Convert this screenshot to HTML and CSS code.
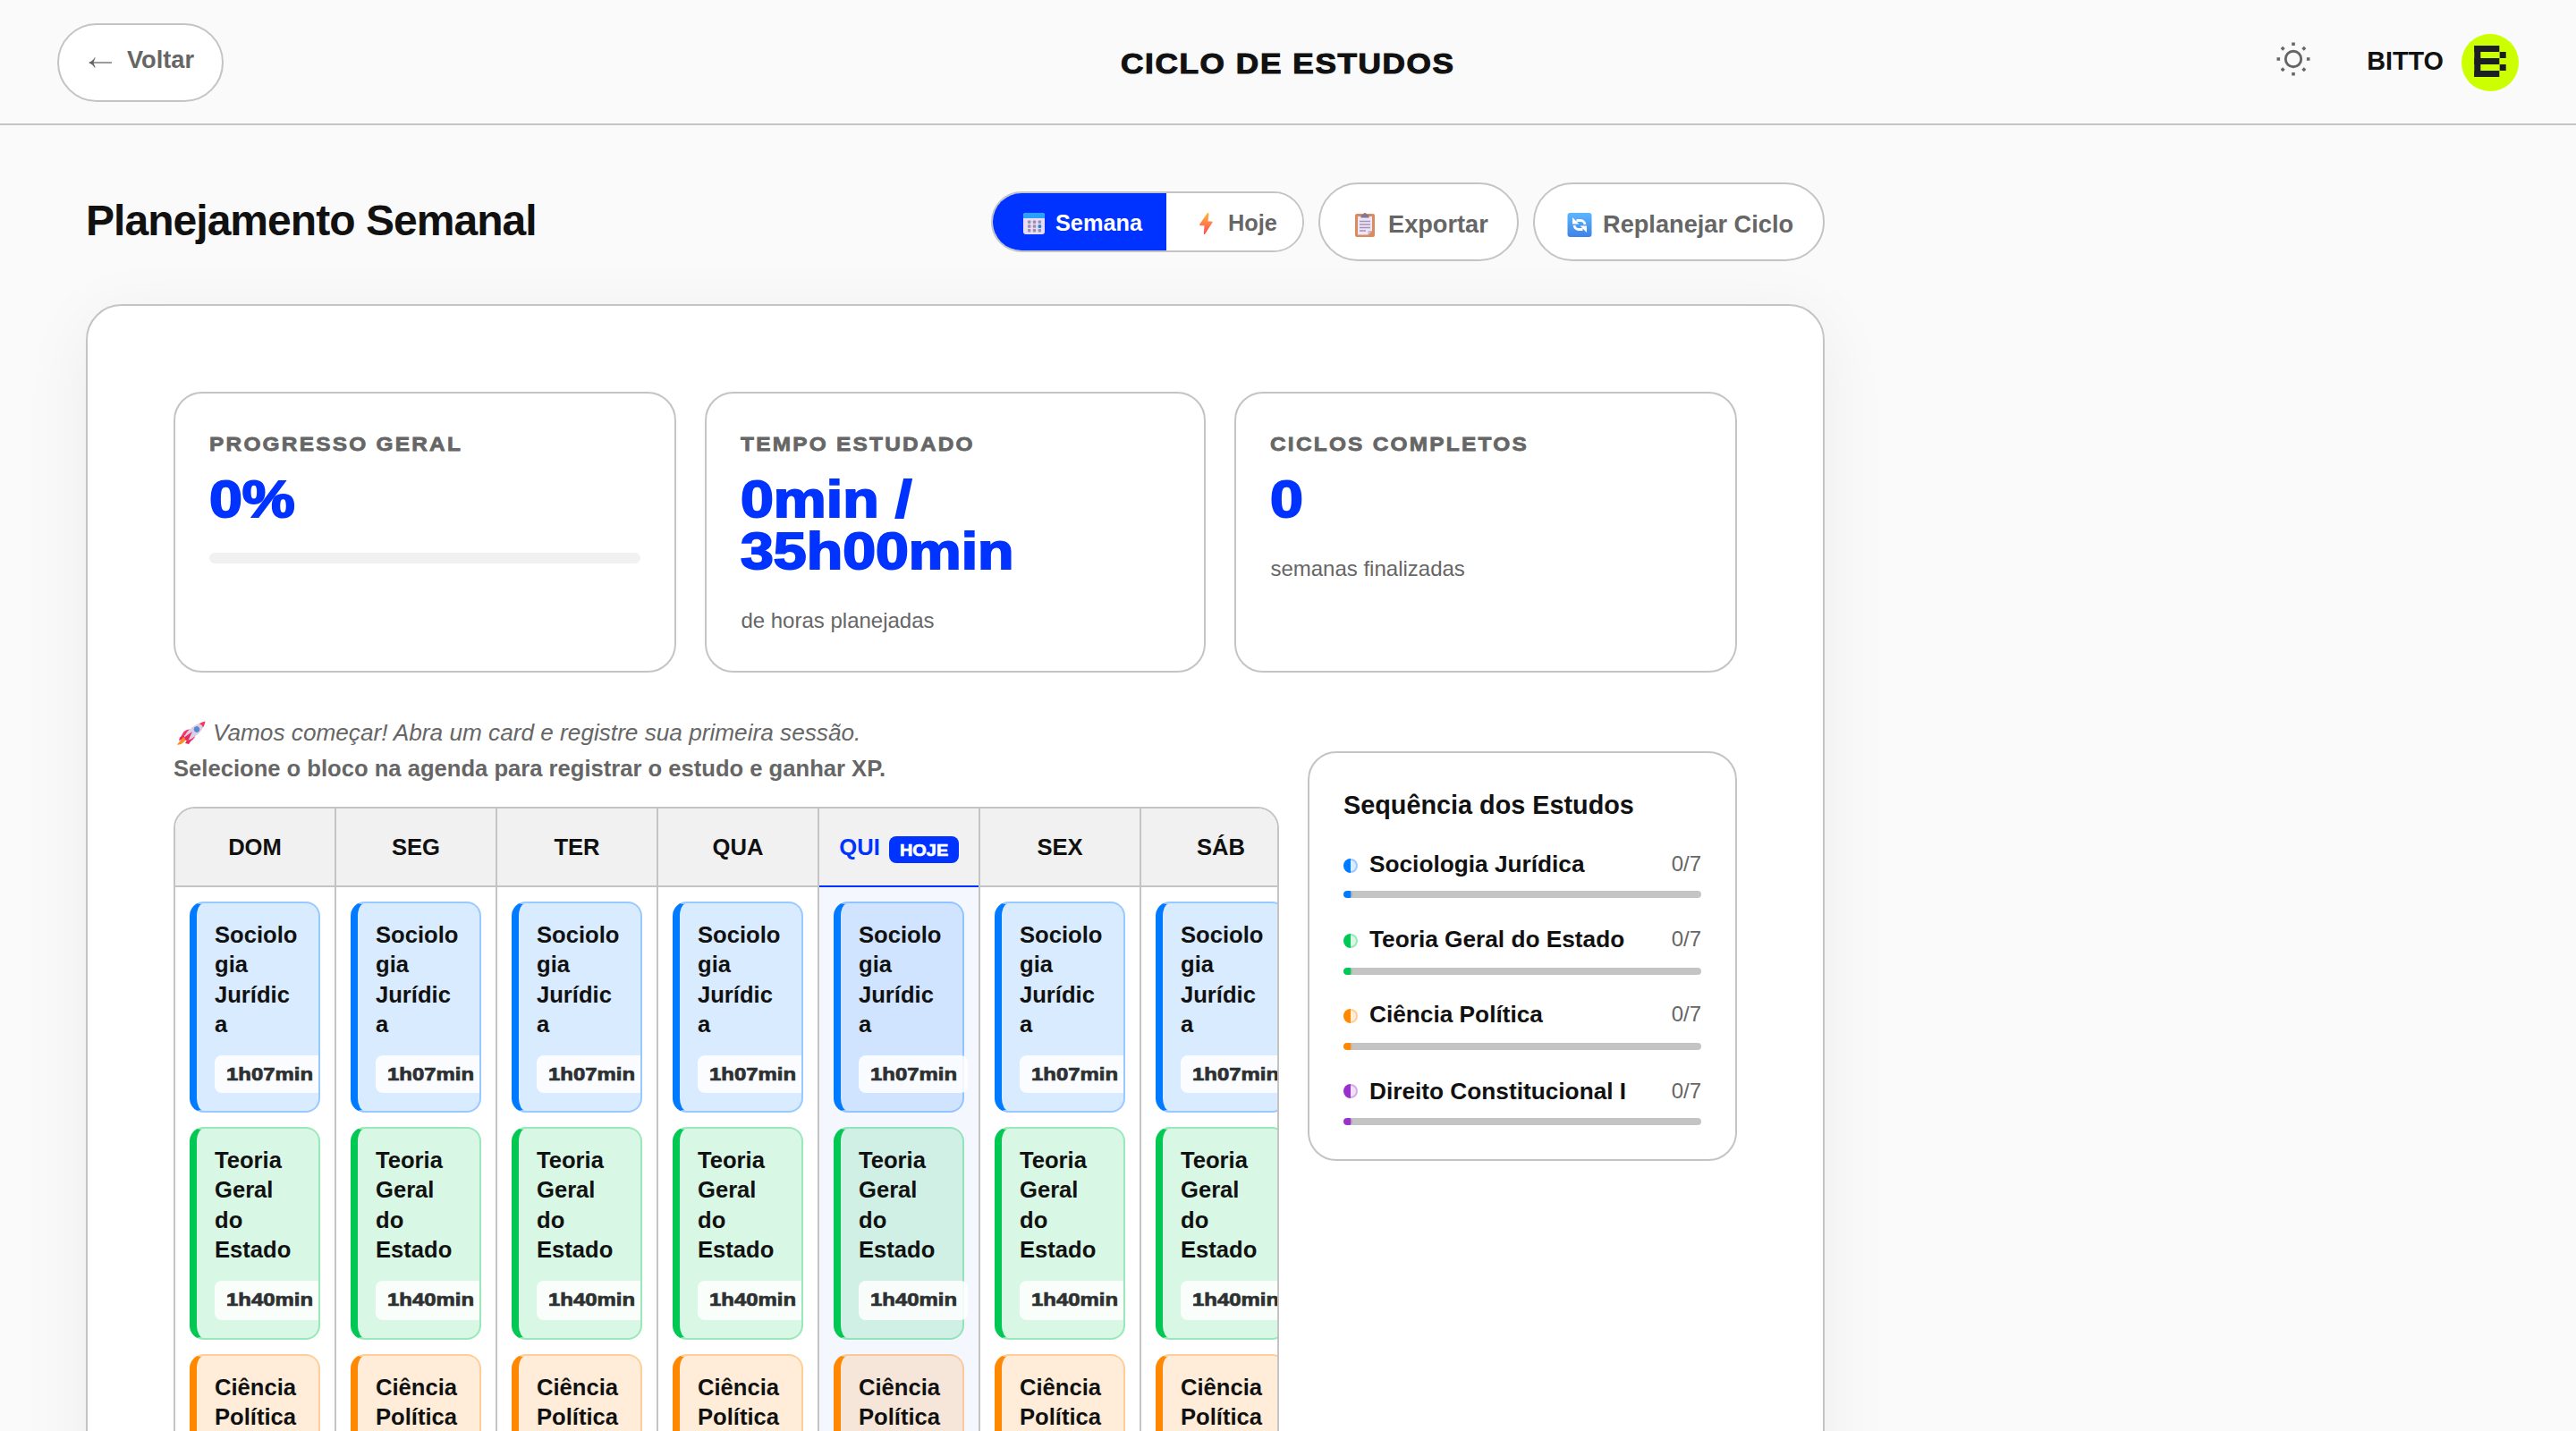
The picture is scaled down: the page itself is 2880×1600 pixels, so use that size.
FILE: index.html
```html
<!DOCTYPE html>
<html lang="pt-BR">
<head>
    <meta charset="UTF-8">
    <meta name="viewport" content="width=device-width, initial-scale=1.0">
    <title>Ciclo de Estudos</title>
    <link rel="stylesheet" href="styles.css">
</head>
<body>
    <header class="topbar">
        <button class="btn btn-back">
            <svg width="26" height="14" viewBox="0 0 26 14"><path d="M1 7H26" fill="none" stroke="#666" stroke-width="1.300"/><path d="M0 7Q5 5 7 1L7.500 2Q6 5 5.500 7Q6 9 7.500 12L7 13Q5 9 0 7Z" fill="#666"/></svg>
            Voltar
        </button>
        <div class="topbar-title heavy">CICLO DE ESTUDOS</div>
        <div class="user">
            <svg class="sun" width="40" height="40" viewBox="-20 -20 40 40">
                <circle r="8.700" fill="none" stroke="#666" stroke-width="2.900"/>
                <g fill="#666">
                    <path d="M-1.800 -18.500h3.600v3.600h-3.600zM-1.800 14.900h3.600v3.600h-3.600zM-18.500 -1.800h3.600v3.600h-3.600zM14.900 -1.800h3.600v3.600h-3.600z"/>
                    <path d="M-11.800 -14.300l2.500 2.500l-2.500 2.500l-2.500 -2.500zM11.800 -14.300l2.500 2.500l-2.500 2.500l-2.500 -2.500zM-11.800 9.300l2.500 2.500l-2.500 2.500l-2.500 -2.500zM11.800 9.300l2.500 2.500l-2.500 2.500l-2.500 -2.500z"/>
                </g>
            </svg>
            <span class="user-name">BITTO</span>
            <svg class="avatar" width="64" height="64" viewBox="0 0 64 64">
                <circle cx="32" cy="32" r="32" fill="#cf0"/>
                <g fill="#1b1f23">
                    <rect x="14.300" y="13" width="7" height="35"/>
                    <rect x="14.300" y="13" width="28" height="7"/>
                    <rect x="14.300" y="27" width="28" height="7"/>
                    <rect x="14.300" y="41" width="28" height="7"/>
                    <rect x="42.700" y="20" width="7" height="7"/>
                    <rect x="42.700" y="34" width="7" height="7"/>
                </g>
            </svg>
        </div>
    </header>

    <main class="container">
        <div class="toolbar">
            <h1>Planejamento Semanal</h1>
            <div class="toolbar-actions">
                <div class="view-toggle">
                    <button class="toggle-btn active">
                        <svg width="26" height="26" viewBox="0 0 26 26">
                            <rect x="1" y="1" width="24" height="24" rx="3" fill="#e6dcf3"/>
                            <path d="M1 7V4a3 3 0 0 1 3-3h18a3 3 0 0 1 3 3v3z" fill="#2aa0fb"/>
                            <g fill="#9a8fae">
                                <rect x="6" y="9.500" width="3.400" height="3.400" rx=".8"/><rect x="11.800" y="9.500" width="3.400" height="3.400" rx=".8"/><rect x="17.600" y="9.500" width="3.400" height="3.400" rx=".8"/>
                                <rect x="6" y="14.300" width="3.400" height="3.400" rx=".8"/><rect x="11.800" y="14.300" width="3.400" height="3.400" rx=".8"/>
                                <rect x="6" y="19" width="3.400" height="3.400" rx=".8"/><rect x="11.800" y="19" width="3.400" height="3.400" rx=".8"/><rect x="17.600" y="19" width="3.400" height="3.400" rx=".8"/>
                            </g>
                            <rect x="17.600" y="14.300" width="3.600" height="3.600" rx=".8" fill="#1a86e8"/>
                        </svg>
                        Semana
                    </button>
                    <button class="toggle-btn">
                        <svg width="26" height="26" viewBox="0 0 26 26">
                            <defs><linearGradient id="bolt" x1="0" y1="0" x2="0" y2="1"><stop offset="0" stop-color="#ffb63d"/><stop offset="1" stop-color="#ff4b55"/></linearGradient></defs>
                            <path d="M15 1L6.200 13.700q-.5 1.200.8 1.500H11.500L10.800 24.500q.5 1 1.500 0L20.400 12q.6-1.200-.9-1.500H15.500L16.500 2q-.4-1.600-1.500-1z" fill="url(#bolt)"/>
                        </svg>
                        Hoje
                    </button>
                </div>
                <button class="btn btn-export">
                    <svg width="28" height="28" viewBox="0 0 28 28">
                        <rect x="3" y="2" width="22" height="26" rx="2" fill="#d98d5f"/>
                        <path d="M6 5h16v16l-4.500 4.500H6z" fill="#eee5f6"/>
                        <path d="M22 21l-4.500 4.500V21z" fill="#c9b6d8"/>
                        <path d="M8 10.500h12M8 14h12M8 17.500h12M8 21h7" stroke="#a294b8" stroke-width="1.400"/>
                        <path d="M9.500 6.500V4.500q0-1.500 1.500-1.500h1q.3-2 2-2t2 2h1q1.500 0 1.500 1.500v2z" fill="#827691"/>
                    </svg>
                    Exportar
                </button>
                <button class="btn btn-replan">
                    <svg width="28" height="28" viewBox="0 0 28 28">
                        <defs><linearGradient id="sync" x1="0" y1="0" x2="0" y2="1"><stop offset="0" stop-color="#5cb6ff"/><stop offset="1" stop-color="#3f83e6"/></linearGradient></defs>
                        <rect x=".5" y="1" width="27" height="27" rx="3" fill="url(#sync)"/>
                        <path d="M10.500 9.500H15a5 5 0 0 1 5 4.500M17.500 19.500H13a5 5 0 0 1-5-4.500" fill="none" stroke="#fff" stroke-width="2.800"/>
                        <path d="M6 6v7.500H13.500zM22 23v-7.500H14.500z" fill="#fff"/>
                    </svg>
                    Replanejar Ciclo
                </button>
            </div>
        </div>

        <section class="board">
            <div class="stats">
                <div class="stat-card">
                    <div class="stat-label heavy">PROGRESSO GERAL</div>
                    <div class="stat-value heavy">0%</div>
                    <div class="stat-bar"></div>
                </div>
                <div class="stat-card">
                    <div class="stat-label heavy">TEMPO ESTUDADO</div>
                    <div class="stat-value heavy">0min /<br>35h00min</div>
                    <div class="stat-sub">de horas planejadas</div>
                </div>
                <div class="stat-card">
                    <div class="stat-label heavy">CICLOS COMPLETOS</div>
                    <div class="stat-value heavy">0</div>
                    <div class="stat-sub">semanas finalizadas</div>
                </div>
            </div>

            <div class="content">
                <div class="agenda-col">
                    <p class="hint">
                        <svg width="32" height="27" viewBox="0 0 32 27">
                            <path d="M8 15L3 18.500L2 22L8 20zM17 20L13 26L9 25L12 20z" fill="#e8265e"/>
                            <path d="M7.500 12Q11 9 14 9.500L10 16L4 18zM21 14Q21 19 15 23L13 18z" fill="#f0386a"/>
                            <path d="M7 18L0 26.500Q5 27.500 10 21z" fill="#ff8a1f"/>
                            <path d="M8 17.500Q14 5 31 1Q29 14 13 21.500Q9 22 8 17.500z" fill="#d9cfe6"/>
                            <path d="M24.500 3.200Q28 1.200 31.500.5Q31 4 29 7.500Q28 4 24.500 3.200z" fill="#f8355f"/>
                            <path d="M8 18.500L17 12L12.500 21.500Q9 23 8 18.500z" fill="#e8265e"/>
                            <circle cx="22" cy="9.500" r="2.900" fill="#3c8fea" stroke="#8a7da8" stroke-width="1"/>
                        </svg>
                        Vamos começar! Abra um card e registre sua primeira sessão.
                    </p>
                    <p class="hint-strong">Selecione o bloco na agenda para registrar o estudo e ganhar XP.</p>
                    <div class="agenda" id="agenda"></div>
                </div>

                <aside class="sequence">
                    <h2>Sequência dos Estudos</h2>
                    <div class="seq-item blue">
                        <div class="seq-row"><span class="dot"></span><span class="seq-name">Sociologia Jurídica</span><span class="seq-count">0/7</span></div>
                        <div class="seq-bar"><div class="seq-fill"></div></div>
                    </div>
                    <div class="seq-item green">
                        <div class="seq-row"><span class="dot"></span><span class="seq-name">Teoria Geral do Estado</span><span class="seq-count">0/7</span></div>
                        <div class="seq-bar"><div class="seq-fill"></div></div>
                    </div>
                    <div class="seq-item orange">
                        <div class="seq-row"><span class="dot"></span><span class="seq-name">Ciência Política</span><span class="seq-count">0/7</span></div>
                        <div class="seq-bar"><div class="seq-fill"></div></div>
                    </div>
                    <div class="seq-item purple">
                        <div class="seq-row"><span class="dot"></span><span class="seq-name">Direito Constitucional I</span><span class="seq-count">0/7</span></div>
                        <div class="seq-bar"><div class="seq-fill"></div></div>
                    </div>
                </aside>
            </div>
        </section>
    </main>

    <script>
  const days = ["DOM", "SEG", "TER", "QUA", "QUI", "SEX", "SÁB"];
  const today = "QUI";
  const blocks = [
    { name: "Sociologia Jurídica", time: "1h07min", color: "blue" },
    { name: "Teoria Geral do Estado", time: "1h40min", color: "green" },
    { name: "Ciência Política", time: "1h07min", color: "orange" },
  ];

  document.getElementById("agenda").innerHTML = days.map((day) => {
    const isToday = day === today;
    const cards = blocks.map((b) => `
      <div class="block ${b.color}">
        <div class="block-name">${b.name}</div>
        <div class="block-time"><span class="heavy">${b.time}</span></div>
      </div>`).join("");
    return `
      <div class="day ${isToday ? "today" : ""}">
        <div class="day-head">${day}${isToday ? '<span class="badge"><span class="heavy">HOJE</span></span>' : ""}</div>
        <div class="day-body">${cards}</div>
      </div>`;
  }).join("");
    </script>
</body>
</html>
```

FILE: styles.css
```css
* {
    box-sizing: border-box;
    margin: 0;
    padding: 0;
}

body {
    font-family: "Liberation Sans", Arial, sans-serif;
    background: #fafafa;
    color: #111;
    height: 1600px;
    overflow: hidden;
}

svg {
    display: block;
    flex: none;
}

.blue { --c: #007bff; --soft: rgba(0, 123, 255, 0.15); --line: rgba(0, 123, 255, 0.3); }
.green { --c: #00c853; --soft: rgba(0, 200, 83, 0.15); --line: rgba(0, 200, 83, 0.3); }
.orange { --c: #ff8800; --soft: rgba(255, 136, 0, 0.15); --line: rgba(255, 136, 0, 0.3); }
.purple { --c: #9932cc; --soft: rgba(153, 50, 204, 0.15); --line: rgba(153, 50, 204, 0.3); }

/* wide black weight for labels and numbers */
.heavy {
    display: block;
    font-weight: 900;
    transform: scaleX(1.15);
    transform-origin: left center;
    -webkit-text-stroke: 0.035em currentColor;
}

/* header */
.topbar {
    display: grid;
    grid-template-columns: 1fr auto 1fr;
    align-items: center;
    height: 140px;
    padding: 0 64px;
    border-bottom: 2px solid #c4c4c4;
}

.btn {
    display: flex;
    align-items: center;
    height: 88px;
    background: #fff;
    border: 2px solid #c4c4c4;
    border-radius: 44px;
    color: #666;
    font-family: inherit;
    font-size: 27.2px;
    font-weight: bold;
    line-height: 1;
    white-space: nowrap;
}

.btn-back {
    width: 186px;
    margin-top: 2px;
    padding: 0 0 6px 33px;
    gap: 17px;
}

.btn-back svg {
    margin-top: 5px;
}

.topbar-title {
    padding-top: 4px;
    font-size: 32px;
    line-height: 1;
    letter-spacing: 1.45px;
    transform: scaleX(1.1);
    transform-origin: center;
}

.user {
    display: flex;
    justify-content: flex-end;
    align-items: center;
}

.sun {
    margin: 0 62px 6px 0;
}

.user-name {
    padding-bottom: 2px;
    font-size: 28.8px;
    font-weight: bold;
    line-height: 1;
}

.avatar {
    margin: 2px 0 0 20px;
}

/* toolbar */
.container {
    width: 1944px;
    margin: 64px 0 0 96px;
}

.toolbar {
    display: flex;
    justify-content: space-between;
    align-items: center;
    margin-bottom: 48px;
}

h1 {
    padding-bottom: 2px;
    font-size: 48px;
    line-height: 1;
    letter-spacing: -0.96px;
}

.toolbar-actions {
    display: flex;
    align-items: center;
    gap: 16px;
}

.view-toggle {
    display: flex;
    width: 350px;
    height: 68px;
    background: #fff;
    border: 2px solid #c4c4c4;
    border-radius: 34px;
    overflow: hidden;
}

.toggle-btn {
    display: flex;
    flex: 1;
    align-items: center;
    gap: 12px;
    padding: 3px 0 0 31px;
    background: #fff;
    border: none;
    color: #666;
    font-family: inherit;
    font-size: 25.3px;
    font-weight: bold;
    line-height: 1;
}

.toggle-btn.active {
    flex: 0 0 194px;
    gap: 11px;
    padding-left: 33px;
    background: #0033ff;
    color: #fff;
}

.btn-export,
.btn-replan {
    padding: 5px 0 0 36px;
    gap: 12px;
}

.btn-export {
    width: 224px;
}

.btn-replan {
    width: 326px;
}

/* main card */
.board {
    height: 1500px;
    padding: 96px;
    background: #fff;
    border: 2px solid #c4c4c4;
    border-radius: 40px;
    box-shadow: 0 16px 80px rgba(0, 0, 0, 0.06);
}

.stats {
    display: grid;
    grid-template-columns: 562px 560px 562px;
    gap: 32px;
}

.stat-card {
    height: 314px;
    padding: 38.4px;
    border: 2px solid #c4c4c4;
    border-radius: 32px;
}

.stat-label {
    margin-bottom: 16px;
    color: #666;
    font-size: 22.8px;
    line-height: 36px;
    letter-spacing: 2.1px;
    white-space: nowrap;
    transform: scaleX(1.07);
}

.stat-value {
    margin-bottom: 30px;
    color: #0033ff;
    font-size: 57.6px;
    line-height: 1;
}

.stat-bar {
    height: 12px;
    background: #f1f1f1;
    border-radius: 6px;
}

.stat-sub {
    margin-top: -1px;
    color: #666;
    font-size: 24px;
    line-height: 1.6;
}

.content {
    display: flex;
    align-items: flex-start;
    gap: 32px;
}

.agenda-col {
    width: 1236px;
    padding-top: 47px;
}

.hint,
.hint-strong {
    color: #666;
    font-size: 25.6px;
    line-height: 40px;
}

.hint {
    display: flex;
    align-items: center;
    gap: 8px;
    padding-left: 4px;
    font-size: 26.2px;
    font-style: italic;
}

.hint-strong {
    margin-bottom: 23px;
    font-weight: bold;
}

/* weekly agenda */
.agenda {
    display: flex;
    height: 900px;
    border: 2px solid #c4c4c4;
    border-radius: 24px;
    overflow: hidden;
}

.day {
    flex: 0 0 180px;
    width: 180px;
    min-width: 0;
    border-right: 2px solid #c4c4c4;
}

.day-head {
    display: flex;
    justify-content: center;
    align-items: center;
    height: 88px;
    padding-top: 1px;
    background: #f1f1f1;
    border-bottom: 2px solid #c4c4c4;
    font-size: 25.6px;
    font-weight: bold;
    line-height: 1;
}

.day-body {
    height: 812px;
    padding: 16px;
}

.today .day-head {
    border-bottom-color: #0033ff;
    color: #0033ff;
}

.today .day-body {
    background: rgba(0, 51, 255, 0.04);
}

.badge {
    width: 78px;
    height: 30px;
    margin: 4px 0 0 10px;
    padding: 1px 0 0 12px;
    background: #0033ff;
    border-radius: 8px;
    color: #fff;
    font-size: 18.6px;
    line-height: 30px;
}

.badge .heavy {
    transform: scaleX(1.07);
}

.block {
    height: 236px;
    margin-bottom: 16px;
    padding: 19px 20px;
    background: var(--soft);
    border: 2px solid var(--line);
    border-left: 8px solid var(--c);
    border-radius: 16px;
    overflow: hidden;
}

.block.green {
    height: 238px;
}

.today .block {
    overflow: visible;
}

.block-name {
    height: 133px;
    margin-bottom: 18px;
    font-size: 25.6px;
    font-weight: bold;
    line-height: 33.28px;
    word-break: break-word;
}

.block-time {
    width: 122px;
    height: 42px;
    padding-left: 12.8px;
    background: rgba(255, 255, 255, 0.85);
    border-radius: 8px;
    color: #2d3132;
    font-size: 20.8px;
    line-height: 42px;
}

.green .block-time {
    height: 44px;
}

/* sequence panel */
.sequence {
    width: 480px;
    height: 458px;
    margin-top: 88px;
    padding: 38px;
    border: 2px solid #c4c4c4;
    border-radius: 32px;
}

h2 {
    margin-bottom: 28px;
    font-size: 28.8px;
    line-height: 40px;
}

.seq-item {
    height: 84px;
}

.seq-row {
    display: flex;
    align-items: center;
    height: 36px;
}

.dot {
    width: 16px;
    height: 16px;
    margin: 4px 13px 0 0;
    background: linear-gradient(90deg, var(--c) 50%, var(--soft) 50%) border-box;
    border: 2px solid var(--line);
    border-left-color: var(--c);
    border-radius: 50%;
}

.seq-name {
    flex: 1;
    padding-top: 1px;
    font-size: 26.24px;
    font-weight: bold;
}

.seq-count {
    color: #666;
    font-size: 24px;
}

.seq-bar {
    height: 8px;
    margin-top: 14px;
    background: #c4c4c4;
    border-radius: 4px;
    overflow: hidden;
}

.seq-item.blue .seq-bar {
    margin-top: 12px;
}

.seq-item.purple .seq-name,
.seq-item.purple .seq-count {
    padding-top: 4px;
}

.seq-fill {
    width: 10px;
    height: 8px;
    background: linear-gradient(90deg, var(--c) 80%, var(--line) 80%);
    border-radius: 4px;
}
```
